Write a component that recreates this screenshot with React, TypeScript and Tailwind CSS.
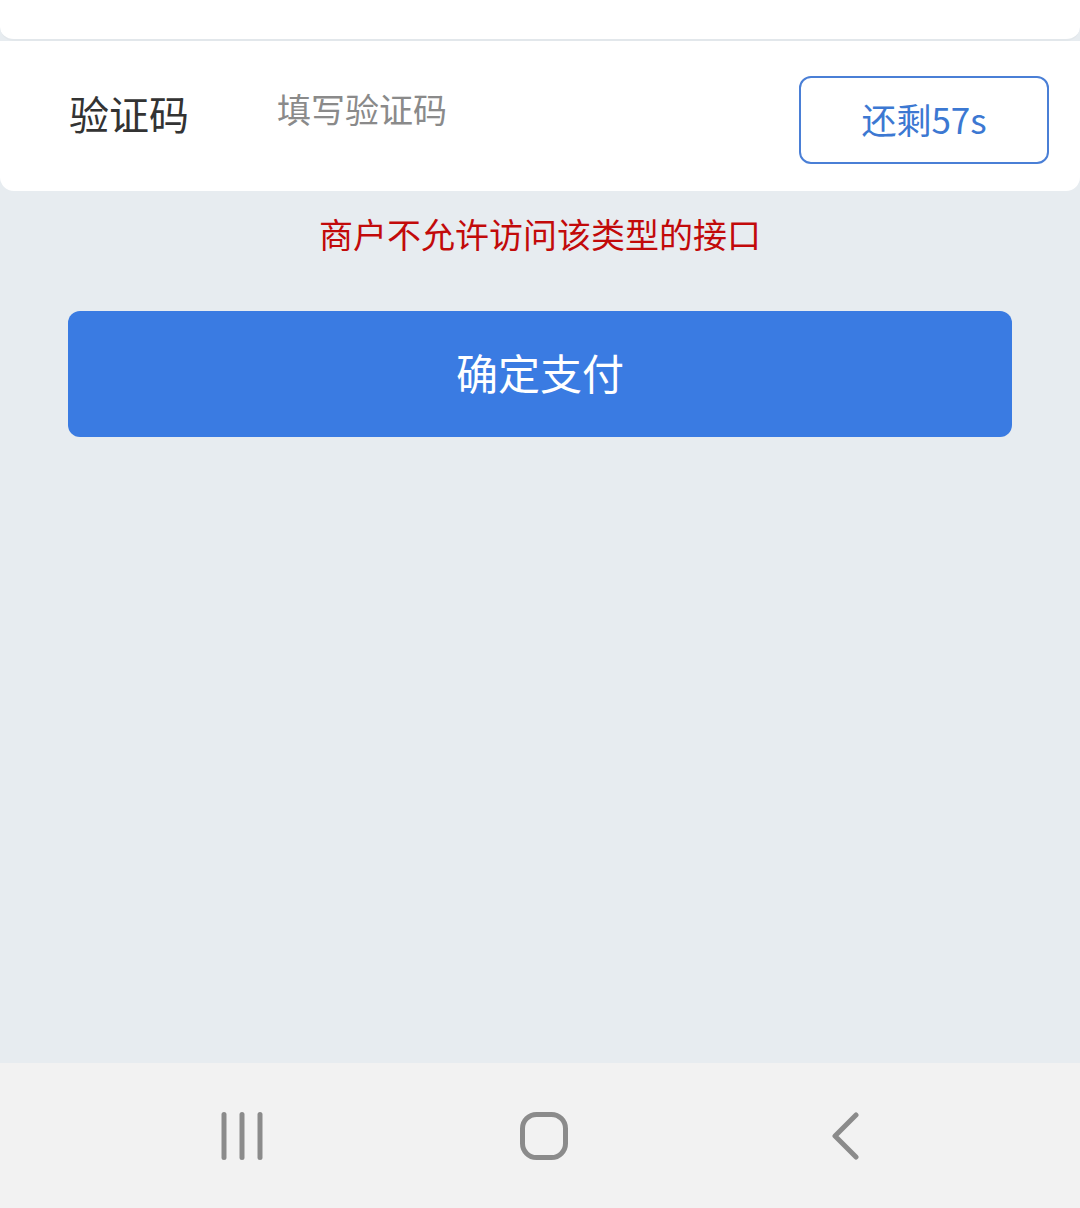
const font = { fontFamily: '"Noto Sans CJK SC", "Noto Sans", sans-serif' };

const RecentIcon = () => (
  <svg width="48" height="48" viewBox="0 0 48 48" fill="none" stroke="#8b8b8b" strokeWidth="5" strokeLinecap="round">
    <line x1="6" y1="2.5" x2="6" y2="45.5" />
    <line x1="24" y1="2.5" x2="24" y2="45.5" />
    <line x1="42" y1="2.5" x2="42" y2="45.5" />
  </svg>
);

const HomeIcon = () => (
  <svg width="50" height="50" viewBox="0 0 50 50" fill="none" stroke="#8b8b8b" strokeWidth="5">
    <rect x="3.5" y="3.5" width="43" height="43" rx="14" />
  </svg>
);

const BackIcon = () => (
  <svg width="32" height="48" viewBox="0 0 32 48" fill="none" stroke="#8b8b8b" strokeWidth="5" strokeLinecap="round" strokeLinejoin="round">
    <polyline points="26,3 5,24 26,45" />
  </svg>
);

export default function App() {
  return (
    <div className="w-[1080px] h-[1208px] flex flex-col bg-[#e7ecf0]" style={font}>
      {/* previous card, cut at the top edge */}
      <div className="h-[41px] bg-white rounded-b-[14px] border-b-2 border-[#e2e7eb]" />

      {/* verification code row */}
      <div className="h-[150px] bg-white rounded-b-[14px] flex items-start">
        <div className="w-[277px] shrink-0 pl-[69px] pt-[46px] text-[40px] leading-[52px] text-[#333333]">验证码</div>
        <div className="pt-[45px] text-[34px] leading-[46px] text-[#8a8a8a]">填写验证码</div>
        <div className="ml-auto mr-[31px] mt-[35px] w-[250px] h-[88px] pb-[2px] rounded-[12px] border-[2.5px] border-[#4a7fd6] flex items-center justify-center text-[35px] text-[#3c78d2]">
          还剩57s
        </div>
      </div>

      <p className="mt-[20px] text-center text-[34px] leading-[46px] text-[#c20a0a]">商户不允许访问该类型的接口</p>

      <button className="mt-[54px] mx-[68px] h-[126px] pb-[5px] rounded-[12px] bg-[#3a7be2] text-white text-[42px] flex items-center justify-center">
        确定支付
      </button>

      <div className="flex-1" />

      {/* system nav bar */}
      <div className="h-[145px] bg-[#f2f2f2] flex items-center pl-[91px]">
        <div className="w-[302px] flex justify-center"><RecentIcon /></div>
        <div className="w-[302px] flex justify-center"><HomeIcon /></div>
        <div className="w-[302px] flex justify-center"><BackIcon /></div>
      </div>
    </div>
  );
}
